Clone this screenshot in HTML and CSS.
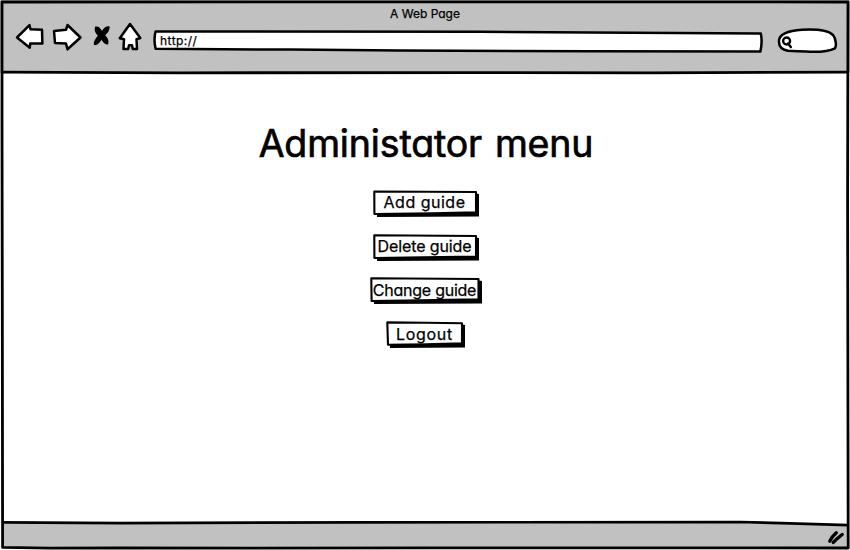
FILE: index.html
```html
<!DOCTYPE html>
<html lang="en">
<head>
<meta charset="utf-8">
<title>A Web Page</title>
<link rel="stylesheet" href="styles.css">
</head>
<body>
<div class="window">
  <header class="chrome">
    <div class="page-title"><span class="t-title">A Web Page</span></div>
    <div class="toolbar">
      <svg class="nav-icons" width="128" height="32" viewBox="15 21 128 32">
        <g fill="#fff" stroke="#000" stroke-width="2.5" stroke-linejoin="round" stroke-linecap="round">
          <path d="M17 37.5L29.5 25.2L30.5 29.2L42 29.7L42.4 43.5L30.2 43.6L29.8 47.7Z"/>
          <path d="M54 31L66 29.8L67.5 25L80.5 37.5L67.5 49.3L66 43.6L55 43Z"/>
          <path d="M130 24L140.3 38L136.5 39.2L137 49L132.8 49L132 45.3L129 45.3L128.2 49L123.5 49L124 39.2L119.8 38.2Z"/>
        </g>
        <path d="M95 26.7C98 25.6 100.5 28 102 31C104 27.6 107 25.5 109.6 26.6C109.8 31 107.4 33 105.2 35.5C107.6 37.5 109.2 40.5 108.2 44.2C105 45.3 103 42 101.4 39.8C99.6 43 97 45.8 94 45C93.2 41.5 95.6 38.5 97.8 35.7C95.4 33 94 30.5 95 26.7Z"/>
      </svg>
      <div class="address">
        <svg class="outline" width="610" height="24" viewBox="153 29 610 24"><path d="M155.6 31.5L480 31.7L590 32.6L760.8 33.4Q762.6 42 760.4 51.6L590 51.3L400 50.6L290 49.6L155.6 48.8Q153.4 39 155.6 31.5Z" fill="#fff" stroke="#000" stroke-width="2.5" stroke-linejoin="round"/></svg>
        <span class="t-url">http://</span>
      </div>
      <svg class="search" width="62" height="28" viewBox="777 27 62 28">
        <g stroke="#000" fill="#fff" stroke-width="2.5" stroke-linecap="round">
          <path d="M779 42C778 34.5 788 30.5 802 29.8C818 29 829 31 833 35C836 38.5 836.6 46 835 48.3C829 51.5 819 52 810 51.8C801 51 794 51 788 50.8C781 49.5 779 46 779 42Z"/>
          <circle cx="786.6" cy="41" r="3.5" stroke-width="2.3"/><path d="M788 43.5L790.8 47"/>
        </g>
      </svg>
    </div>
  </header>
  <main class="content">
    <h1 class="heading"><span class="t-heading">Administator menu</span></h1>
    <nav class="menu">
      <button class="button add"><svg class="face" viewBox="0 0 107 27" preserveAspectRatio="none"><path class="shade" d="M4 23L103 22L103 3.5L106 4V26.5L4 27Z"/><path class="box" d="M1.3 1.5L103 2V22.4L60 23.3L1.4 24Z"/></svg><span class="t-add">Add guide</span></button>
      <button class="button delete"><svg class="face" viewBox="0 0 107 27" preserveAspectRatio="none"><path class="shade" d="M4 23L103 22L103 3.5L106 4V26.5L4 27Z"/><path class="box" d="M1.3 1.3L103 2V22.6L50 23.3L1.4 24Z"/></svg><span class="t-delete">Delete guide</span></button>
      <button class="button change"><svg class="face" viewBox="0 0 113 27" preserveAspectRatio="none"><path class="shade" d="M4 23L109 22V3.5L112 4V26.5L4 27Z"/><path class="box" d="M1.3 1.3L108.5 2V22.4L50 23.3L1.6 24Z"/></svg><span class="t-change">Change guide</span></button>
      <button class="button logout"><svg class="face" viewBox="0 0 80 27" preserveAspectRatio="none"><path class="shade" d="M4 23L76 22V3.5L79 4V26.5L4 27Z"/><path class="box" d="M1.3 1.4L40 1.8L76 2.2V22.4L40 23.3L2 23.8Z"/></svg><span class="t-logout">Logout</span></button>
    </nav>
  </main>
  <footer class="status">
    <svg class="grip" width="850" height="30" viewBox="0 520 850 30">
      <path d="M2 522.4L760 522.2L848 525V548H2Z" fill="#c1c1c1"/>
      <path d="M2 522.4L120 523.1L360 522.4L740 522L790 523.4L848 525.2" fill="none" stroke="#000" stroke-width="2.7"/>
      <path d="M829.8 541.2Q831.5 537 836.3 532.8M833.3 542.4Q836.5 539 842.2 534.5" fill="none" stroke="#000" stroke-width="3.4" stroke-linecap="round"/>
    </svg>
  </footer>
  <svg class="frame" width="850" height="550" viewBox="0 0 850 550">
    <g fill="none" stroke="#000" stroke-width="2.8" stroke-linejoin="round">
      <path d="M2 2L420 1.8L848 2L847.6 200L848.2 548L430 547.8L250 548.1L120 548L50 548.2L2.6 547.4L2.3 300L2 120Z"/>
      <path d="M2 72.2L180 72.8L480 72.6L650 72.8L848 72.2"/>
    </g>
  </svg>
</div>
</body>
</html>
```
FILE: styles.css
```css
* { box-sizing: border-box; }
body {
  margin: 0;
  background: #fff;
  color: #000;
  font-family: Inter, "Liberation Sans", sans-serif;
  font-feature-settings: "cv11", "calt" 0;
}
svg { display: block; }
.window {
  position: relative;
  display: flex;
  flex-direction: column;
  width: 850px;
  height: 550px;
  overflow: hidden;
}
.frame { position: absolute; inset: 0; pointer-events: none; }
.chrome { height: 73px; padding: 5px 11px 0 15px; background: #c1c1c1; }
.page-title {
  height: 16px;
  padding-right: 4px;
  text-align: center;
  font-size: 12px;
  line-height: 17px;
  -webkit-text-stroke: 0.25px #000;
}
.toolbar { display: flex; align-items: flex-start; height: 32px; }
.nav-icons { flex: none; margin-right: 10px; }
.address {
  position: relative;
  width: 610px;
  height: 24px;
  margin-top: 8px;
  padding-left: 7px;
  font-size: 12px;
  line-height: 23px;
  letter-spacing: 0.45px;
  -webkit-text-stroke: 0.25px #000;
}
.address span { position: relative; }
.outline { position: absolute; inset: 0; }
.search { margin: 6px 0 0 14px; flex: none; }
.content { flex: 1; display: flex; flex-direction: column; align-items: center; padding: 47px 0 0 2px; }
.heading {
  margin: 0;
  height: 48px;
  font-size: 37.5px;
  font-weight: 400;
  line-height: 48px;
  letter-spacing: -0.15px;
  word-spacing: 2.5px;
  white-space: nowrap;
  -webkit-text-stroke: 0.7px #000;
}
.menu { display: flex; flex-direction: column; align-items: center; gap: 16.6px; margin-top: 22px; }
.button {
  position: relative;
  height: 27px;
  padding: 0 3px 3px 0;
  border: 0;
  background: none;
  color: #000;
  font: inherit;
  font-feature-settings: inherit;
  font-size: 16px;
  line-height: 24px;
  white-space: nowrap;
  -webkit-text-stroke: 0.25px #000;
}
.button span { position: relative; }
.face { position: absolute; inset: 0; width: 100%; height: 100%; }
.box { fill: #fff; stroke: #000; stroke-width: 2.1; stroke-linejoin: round; }
.shade { fill: #000; }
.add, .delete { width: 107px; }
.add { letter-spacing: 0.5px; }
.delete { letter-spacing: -0.1px; }
.change { width: 113px; letter-spacing: -0.25px; }
.logout { width: 80px; letter-spacing: 0.7px; }
.change, .logout { padding-top: 1px; padding-bottom: 2px; }
.status { height: 30px; }
```
